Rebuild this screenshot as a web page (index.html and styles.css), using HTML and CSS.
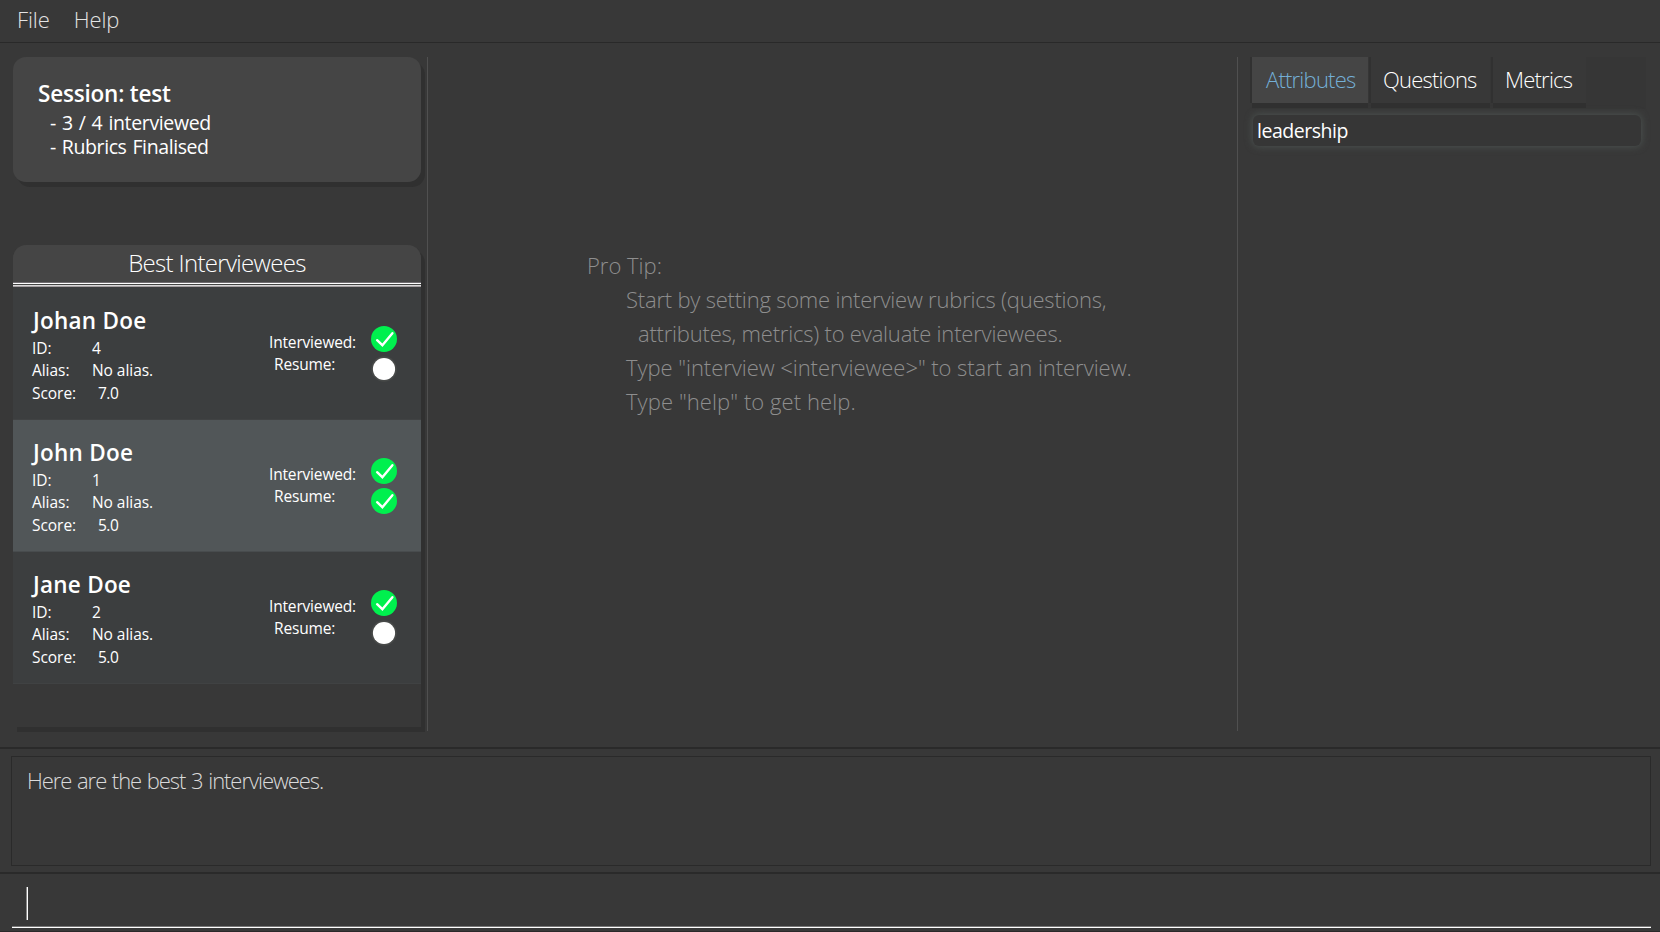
FILE: index.html
```
<!DOCTYPE html>
<html lang="en">
<head>
<meta charset="utf-8">
<title>Interview Manager</title>
<link rel="stylesheet" href="styles.css">
</head>
<body>
<svg class="defs" width="0" height="0">
  <symbol id="done" viewBox="0 0 26 26">
    <circle cx="13" cy="13" r="13" fill="#00f04e"/>
    <path d="M6.1 14.2 11.4 19.2 21.4 7.2" fill="none" stroke="#fff" stroke-width="2.4" stroke-linecap="round"/>
  </symbol>
  <symbol id="pending" viewBox="0 0 26 26">
    <circle cx="13" cy="13" r="12.8" fill="#474948"/>
    <circle cx="13" cy="13" r="11.1" fill="#fff"/>
  </symbol>
</svg>
<nav class="menu"><span>File</span><span>Help</span></nav>
<main class="main">
  <section class="left">
    <div class="session">
      <h1 class="session-title">Session: test</h1>
      <p class="session-line count">- 3 / 4 interviewed</p>
      <p class="session-line">- Rubrics Finalised</p>
    </div>
    <div class="list">
      <h2 class="list-title">Best Interviewees</h2>
      <div class="rule"></div>
      <article class="person">
        <div class="info">
          <h3 class="name">Johan Doe</h3>
          <dl class="facts"><dt class="id">ID:</dt><dd>4</dd><dt>Alias:</dt><dd>No alias.</dd><dt>Score:</dt><dd class="score">7.0</dd></dl>
        </div>
        <div class="labels"><p>Interviewed:</p><p class="resume">Resume:</p></div>
        <div class="marks"><svg><use href="#done"/></svg><svg><use href="#pending"/></svg></div>
      </article>
      <article class="person selected">
        <div class="info">
          <h3 class="name">John Doe</h3>
          <dl class="facts"><dt class="id">ID:</dt><dd>1</dd><dt>Alias:</dt><dd>No alias.</dd><dt>Score:</dt><dd class="score">5.0</dd></dl>
        </div>
        <div class="labels"><p>Interviewed:</p><p class="resume">Resume:</p></div>
        <div class="marks"><svg><use href="#done"/></svg><svg><use href="#done"/></svg></div>
      </article>
      <article class="person">
        <div class="info">
          <h3 class="name">Jane Doe</h3>
          <dl class="facts"><dt class="id">ID:</dt><dd>2</dd><dt>Alias:</dt><dd>No alias.</dd><dt>Score:</dt><dd class="score">5.0</dd></dl>
        </div>
        <div class="labels"><p>Interviewed:</p><p class="resume">Resume:</p></div>
        <div class="marks"><svg><use href="#done"/></svg><svg><use href="#pending"/></svg></div>
      </article>
    </div>
  </section>
  <section class="center">
    <p class="tip-head">Pro Tip:</p>
    <p class="tip">Start by setting some interview rubrics (questions,</p>
    <p class="tip more">attributes, metrics) to evaluate interviewees.</p>
    <p class="tip wide">Type "interview &lt;interviewee&gt;" to start an interview.</p>
    <p class="tip last">Type "help" to get help.</p>
  </section>
  <section class="right">
    <div class="tabs">
      <span class="tab attributes">Attributes</span>
      <span class="tab questions">Questions</span>
      <span class="tab metrics">Metrics</span>
    </div>
    <div class="item">leadership</div>
  </section>
</main>
<section class="result"><div class="result-box">Here are the best 3 interviewees.</div></section>
<footer class="command"><div class="field"><i class="caret"></i></div></footer>
</body>
</html>
```
FILE: styles.css
```
* { box-sizing: border-box; margin: 0; padding: 0; }
body {
  width: 1660px; height: 932px; overflow: hidden;
  display: flex; flex-direction: column;
  background: #383838; color: #fff;
  font-family: "Open Sans", "Noto Sans", sans-serif;
  font-size: 22px; font-weight: 300; white-space: nowrap;
}
.defs { position: absolute; }

.menu {
  height: 43px; padding-left: 17px; display: flex; gap: 24px;
  border-bottom: 1px solid #292929; color: #e4e4e4;
  line-height: 39px; letter-spacing: -.1px;
}

.main { height: 704px; padding: 14px 14px 16px 13px; display: flex; }
.left { width: 415px; padding-right: 6px; border-right: 1px solid #505050; display: flex; flex-direction: column; }

.session {
  height: 125px; padding: 24px 0 0 25px; border-radius: 13px;
  background: #454545; box-shadow: 4px 5px 0 #303030;
}
.session-title { font-size: 22.5px; font-weight: 600; line-height: 26px; letter-spacing: -.2px; }
.session-line { padding-left: 12px; font-size: 19.5px; font-weight: 400; line-height: 24px; letter-spacing: -.4px; word-spacing: 1.3px; }
.session-line.count { margin-top: 4px; letter-spacing: -.35px; }

.list {
  height: 482px; margin-top: 63px; border-radius: 13px 13px 0 0;
  background: #383838; box-shadow: 4px 5px 0 #303030;
}
.list-title {
  height: 37px; border-radius: 13px 13px 0 0; background: #454545;
  font-size: 24px; font-weight: 300; line-height: 36px; text-align: center; letter-spacing: -.67px;
}
.rule {
  height: 6px;
  background: linear-gradient(#706c70 0 1px, #fff 1px 2px, #444 2px 3px, #d8d8d8 3px 4px, #a49ea1 4px 5px, #3c3e3f 5px);
}
.person { height: 132px; padding: 21px 24px 0 19px; display: flex; background: #3c3e3f; border-bottom: 1px solid #404243; }
.person.selected { background: #515658; border-bottom-color: #484c4e; }
.info { width: 237px; }
.name { padding-left: 1px; font-size: 22.5px; font-weight: 600; line-height: 24px; letter-spacing: .25px; }
.facts {
  margin-top: 4px; display: grid; grid-template-columns: 60px 1fr;
  font-size: 15.5px; font-weight: 400; line-height: 22.4px; letter-spacing: -.05px;
}
.facts .score { padding-left: 6px; letter-spacing: -.5px; }
.labels { width: 102px; padding-top: 22px; font-size: 15.5px; font-weight: 400; line-height: 22px; letter-spacing: -.17px; }
.labels .resume { padding-left: 5px; }
.marks { width: 26px; padding-top: 17px; display: flex; flex-direction: column; gap: 4px; }
.marks svg { width: 26px; height: 26px; flex: none; }

.center {
  width: 810px; padding: 191px 0 0 159px; border-right: 1px solid #505050;
  color: #8e8e8e; line-height: 34px; letter-spacing: -.21px;
}
.tip-head { letter-spacing: 0; }
.tip { padding-left: 39px; }
.tip.more { padding-left: 51px; }
.tip.wide { letter-spacing: -.05px; }
.tip.last { letter-spacing: .08px; }

.right { flex: 1; padding-left: 14px; }
.tabs { height: 52px; display: flex; gap: 3px; background: #363636; letter-spacing: -.78px; }
.tab { height: 46px; line-height: 45px; padding-left: 12px; background: #383838; box-shadow: -2px 0 0 #313131, 0 5px 0 #303030; }
.attributes { width: 116px; padding-left: 14px; background: #454545; color: #74afd6; }
.questions { width: 119px; }
.metrics { width: 93px; padding-left: 12px; }
.item {
  width: 388px; height: 31px; margin: 6px 0 0 1px; padding-left: 4px; border-radius: 6px;
  background: #363636; box-shadow: 0 0 7px 1px #4a504e;
  font-size: 19.5px; font-weight: 400; line-height: 32px; letter-spacing: -.47px;
}

.result { height: 125px; padding: 7px 9px 0 11px; border-top: 2px solid #2a2a2a; }
.result-box {
  height: 110px; padding: 8px 0 0 15px; border: 1px solid #2a2a2a;
  color: #dadada; line-height: 31px; letter-spacing: -1.05px; word-spacing: 1px;
}

.command { height: 60px; padding: 0 9px 0 12px; border-top: 2px solid #2a2a2a; border-bottom: 1px solid #2a2829; }
.field { height: 54px; padding: 13px 0 0 14px; border-bottom: 1px solid #fff; box-shadow: inset 0 -1px 0 #777; }
.caret { display: block; width: 2px; height: 33px; border-right: 1px solid #fff; background: #8a8a8a; }
```
